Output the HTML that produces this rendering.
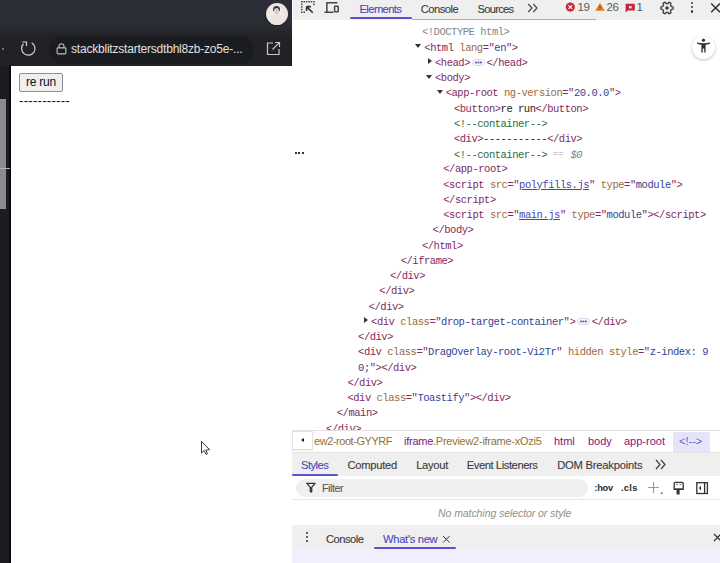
<!DOCTYPE html>
<html><head><meta charset="utf-8">
<style>
*{margin:0;padding:0;box-sizing:border-box}
html,body{width:720px;height:563px;overflow:hidden;background:#fff;font-family:"Liberation Sans",sans-serif}
.a{position:absolute}
/* browser chrome */
#topbar{left:0;top:0;width:292px;height:36px;background:linear-gradient(#2b2e36 0,#2a2d34 26px,#222428 35px)}
#addr{left:0;top:35px;width:292px;height:30.5px;background:#212226}
#pill{left:49px;top:36px;width:205px;height:27.5px;border-radius:14px;background:#1b1c1f}
#url{left:71px;top:42px;font-size:12px;letter-spacing:-0.21px;color:#e0e0e0;white-space:nowrap}
#leftstrip{left:0;top:65.5px;width:11px;height:498px;background:#1c1d20}
#leftline{left:9px;top:65px;width:2px;height:498px;background:#0a0a0b}
#thumb{left:0;top:99px;width:6px;height:110px;background:#8a8b8f}
#page{left:11px;top:65.5px;width:281px;height:498px;background:#fff}
#btn{left:18.5px;top:73.3px;width:44.3px;height:18.3px;background:#efefef;border:1px solid #8f8f8f;border-radius:2px;font-size:12px;letter-spacing:-0.25px;color:#111;text-align:left;padding-left:6.6px;line-height:17.5px}
#dashes{left:19px;top:93.2px;font-size:13.3px;color:#111;letter-spacing:0.2px}
/* devtools */
#dt{left:292px;top:0;width:429px;height:563px;background:#fff}
#tb{left:293px;top:0;width:427px;height:19.5px;background:#efefef}
.tab{font-size:10.6px;color:#3a3a3a;white-space:nowrap;-webkit-text-stroke:0.1px currentColor}
.mono{font-family:"Liberation Mono",monospace;font-size:10.5px;letter-spacing:-0.47px;white-space:pre;line-height:15px;height:15px}
.t{color:#7f2a5e}
.n{color:#9b6a42}
.v{color:#34448f}
.c{color:#2a6b40}
.g{color:#80868b}
.tri{width:0;height:0;border-left:3.5px solid transparent;border-right:3.5px solid transparent;border-top:4.2px solid #333}
.bc{font-size:11px;white-space:nowrap}
.k{color:#222}
.lk{color:#4b45a8;text-decoration:underline}
.eq{display:inline-block;width:11.66px;color:#9a9a9a;font-size:8.5px;letter-spacing:0;vertical-align:1.5px}
.sel{color:#80868b;font-style:italic}
.ell{display:inline-block;width:13px;height:7px;vertical-align:middle;margin:0 1.5px 0 2px;position:relative;top:-0.5px}
.trr{width:0;height:0;border-top:3.1px solid transparent;border-bottom:3.1px solid transparent;border-left:4.4px solid #333}
</style></head><body>
<div class="a" id="topbar"></div>
<div class="a" id="addr"></div>
<div class="a" id="pill"></div>
<div class="a" id="url">stackblitzstartersdtbhl8zb-zo5e-...</div>
<div class="a" id="leftstrip"></div>
<div class="a" id="leftline"></div>
<div class="a" id="thumb"></div>
<div class="a" style="left:0;top:168px;width:10px;height:1px;background:#b5b5b8"></div>
<div class="a" id="page"></div>
<div class="a" id="btn">re run</div>
<div class="a" id="dashes">-----------</div>

<div class="a" id="dt"></div>
<div class="a" id="tb"></div>
<div class="a tab" style="left:359.50px;top:3px;font-size:11.2px;letter-spacing:-0.597px;color:#4b47b9">Elements</div>
<div class="a" style="left:350px;top:17px;width:62px;height:2px;background:#5a52d0;border-radius:1px"></div>
<div class="a" style="left:412px;top:19.3px;width:184px;height:1.2px;background:#a9a3e6"></div>
<div class="a tab" style="left:420.75px;top:3px;font-size:11.2px;letter-spacing:-0.515px">Console</div>
<div class="a tab" style="left:477.50px;top:3px;font-size:11.2px;letter-spacing:-0.722px">Sources</div>



<!-- chrome icons -->
<svg class="a" style="left:19px;top:39px" width="19" height="19" viewBox="0 0 19 19"><path d="M12.65 3.7 A6.7 6.7 0 1 1 4.56 4.76" fill="none" stroke="#d4d4d4" stroke-width="1.2"/><path d="M3.3 3 H7.5 V7" fill="none" stroke="#d4d4d4" stroke-width="1.2"/></svg>
<div class="a" style="left:1.5px;top:48px;width:2px;height:2px;background:#888;border-radius:1px"></div>
<svg class="a" style="left:56px;top:43px" width="11" height="12" viewBox="0 0 11 12"><rect x="1.1" y="4.9" width="8.8" height="6" rx="0.9" fill="none" stroke="#bdbdbd" stroke-width="1.1"/><path d="M3 4.9 V3.3 A2.5 2.5 0 0 1 8 3.3 V4.9" fill="none" stroke="#bdbdbd" stroke-width="1.1"/></svg>
<svg class="a" style="left:266px;top:41px" width="15" height="15" viewBox="0 0 15 15"><path d="M7 2 H1.5 V13.5 H13 V8" fill="none" stroke="#c8c8c8" stroke-width="1.2"/><path d="M6.5 8.5 L13.3 1.7 M9 1.5 H13.5 V6" fill="none" stroke="#c8c8c8" stroke-width="1.2"/></svg>
<div class="a" style="left:265.2px;top:2.6px;width:23px;height:23px;border-radius:12px;background:#1e2024"></div><div class="a" style="left:265.8px;top:3.2px;width:21.8px;height:21.8px;border-radius:11px;background:radial-gradient(circle at 45% 55%, #f1ebe8 0 40%, #e9e1de 60%, #f3f1f0 80%);overflow:hidden"><div class="a" style="left:7px;top:2.5px;width:7px;height:5px;border-radius:4px 4px 1px 1px;background:#3a3433"></div><div class="a" style="left:8px;top:5px;width:5px;height:6px;border-radius:3px;background:#ddc8bf"></div><div class="a" style="left:5px;top:11px;width:11px;height:11px;border-radius:5px 5px 0 0;background:#efe3dd"></div></div>

<svg class="a" style="left:200px;top:440px" width="12" height="16" viewBox="0 0 12 16"><path d="M1.5 1.4 V13 L4.2 10.6 L6 14.4 L7.5 13.7 L5.8 10 L9.6 9.7 Z" fill="#fff" stroke="#222" stroke-width="0.9" stroke-linejoin="round"/></svg>
<!-- devtools toolbar icons -->
<svg class="a" style="left:299px;top:0px" width="17" height="16" viewBox="0 0 17 16"><rect x="2" y="1.0" width="1.5" height="1.5" fill="#444"/><rect x="4.45" y="1.0" width="1.5" height="1.5" fill="#444"/><rect x="6.9" y="1.0" width="1.5" height="1.5" fill="#444"/><rect x="9.35" y="1.0" width="1.5" height="1.5" fill="#444"/><rect x="11.8" y="1.0" width="1.5" height="1.5" fill="#444"/><rect x="14.25" y="1.0" width="1.5" height="1.5" fill="#444"/><rect x="2" y="3.6" width="1.5" height="1.5" fill="#444"/><rect x="2" y="6.2" width="1.5" height="1.5" fill="#444"/><rect x="2" y="8.8" width="1.5" height="1.5" fill="#444"/><rect x="2" y="11.5" width="1.5" height="1.5" fill="#444"/><rect x="14.25" y="3.6" width="1.5" height="1.5" fill="#444"/><rect x="4.45" y="11.5" width="1.5" height="1.5" fill="#444"/><path d="M7.6 6.6 L13.8 12.8 M7.4 6.6 H12 M7.6 6.4 V11" fill="none" stroke="#333" stroke-width="1.6"/></svg>
<svg class="a" style="left:323px;top:0px" width="18" height="16" viewBox="0 0 18 16"><path d="M3.3 2.8 H14.4 M3.9 2.8 V12.3 M1.5 12.3 H10.5" fill="none" stroke="#444" stroke-width="1.5"/><rect x="11.6" y="6.2" width="3.6" height="5.6" rx="0.5" fill="none" stroke="#444" stroke-width="1.5"/></svg>
<svg class="a" style="left:527px;top:3px" width="12" height="10" viewBox="0 0 12 10"><path d="M1.3 1 L5 5 L1.3 9 M6.3 1 L10 5 L6.3 9" fill="none" stroke="#444" stroke-width="1.2"/></svg>
<svg class="a" style="left:565px;top:2px" width="11" height="11" viewBox="0 0 11 11"><circle cx="5.3" cy="5.1" r="4.6" fill="#c8283b"/><path d="M3.5 3.3 L7.1 6.9 M7.1 3.3 L3.5 6.9" stroke="#fff" stroke-width="1.2"/></svg>
<div class="a tab" style="left:577.5px;top:0.8px;color:#5a5a5a;font-size:11.5px;letter-spacing:-0.3px;-webkit-text-stroke:0">19</div>
<svg class="a" style="left:594px;top:2px" width="12" height="10" viewBox="0 0 12 10"><path d="M6 0.8 L10.8 8.8 H1.2 Z" fill="#e0801c"/><path d="M6 3.8 V6.3" stroke="#7a3a00" stroke-width="1"/><circle cx="6" cy="7.6" r="0.5" fill="#7a3a00"/></svg>
<div class="a tab" style="left:606.5px;top:0.8px;color:#5a5a5a;font-size:11.5px;letter-spacing:-0.3px;-webkit-text-stroke:0">26</div>
<svg class="a" style="left:625px;top:3px" width="11" height="10" viewBox="0 0 11 10"><path d="M0.6 0.8 H9.8 V7.6 H3 L0.6 9.6 Z" fill="#c8283b"/><rect x="4" y="3" width="2.6" height="2.4" fill="#fff" opacity="0.85"/></svg>
<div class="a tab" style="left:636.5px;top:0.8px;color:#5a5a5a;font-size:11.5px;-webkit-text-stroke:0">1</div>
<svg class="a" style="left:659px;top:-0.5px" width="16" height="16" viewBox="0 0 16 16"><path d="M14.10 6.90 L14.10 9.10 L12.37 9.42 L11.42 11.08 L12.00 12.74 L10.10 13.83 L8.96 12.50 L7.04 12.50 L5.90 13.83 L4.00 12.74 L4.58 11.08 L3.63 9.42 L1.90 9.10 L1.90 6.90 L3.63 6.58 L4.58 4.92 L4.00 3.26 L5.90 2.17 L7.04 3.50 L8.96 3.50 L10.10 2.17 L12.00 3.26 L11.42 4.92 L12.37 6.58Z" fill="none" stroke="#3c3c3c" stroke-width="1.3" stroke-linejoin="round"/><circle cx="8" cy="8" r="1.8" fill="#3c3c3c"/></svg>
<div class="a" style="left:690.8px;top:2.1px;width:2.4px;height:2.4px;border-radius:1.2px;background:#3a3a3a"></div>
<div class="a" style="left:690.8px;top:6px;width:2.4px;height:2.4px;border-radius:1.2px;background:#3a3a3a"></div>
<div class="a" style="left:690.8px;top:10.2px;width:2.4px;height:2.4px;border-radius:1.2px;background:#3a3a3a"></div>
<svg class="a" style="left:710px;top:3px" width="12" height="10" viewBox="0 0 12 10"><path d="M1.2 0.6 L10 9.2 M10 0.6 L1.2 9.2" stroke="#2a2a2a" stroke-width="1.4"/></svg>

<!-- accessibility floating button -->
<div class="a" style="left:692px;top:36px;width:23px;height:23px;border-radius:12px;background:#fff;box-shadow:0 1px 3px rgba(0,0,0,0.25)"></div>
<svg class="a" style="left:696px;top:38px" width="15" height="16" viewBox="0 0 15 16"><circle cx="7.5" cy="2.2" r="1.6" fill="#333"/><path d="M1 4.5 Q7.5 6 14 4.5 L14 5.8 Q11 6.6 9.6 6.8 V14.5 H8.2 V10.5 H6.8 V14.5 H5.4 V6.8 Q4 6.6 1 5.8 Z" fill="#333"/></svg>
<!-- ... dots -->
<div class="a" style="left:294.5px;top:152px;width:2px;height:2px;background:#333"></div>
<div class="a" style="left:298px;top:152px;width:2px;height:2px;background:#333"></div>
<div class="a" style="left:301.5px;top:152px;width:2px;height:2px;background:#333"></div>

<!-- breadcrumb bar -->
<div class="a" style="left:292px;top:430px;width:428px;height:1px;background:#e2e2e2"></div>
<div class="a" style="left:292px;top:431px;width:428px;height:22px;background:#fff"></div>
<div class="a" style="left:292.4px;top:431.3px;width:21px;height:18.8px;background:#fff;border:1px solid #e2e2e2;box-shadow:0 1px 1px rgba(0,0,0,0.06)"></div>
<div class="a" style="left:301.2px;top:438.1px;width:0;height:0;border-top:2.3px solid transparent;border-bottom:2.3px solid transparent;border-right:3.8px solid #111"></div>
<div class="a bc" style="left:314px;top:435px;color:#94703a;letter-spacing:-0.45px">ew2-root-GYYRF</div>
<div class="a bc" style="left:404px;top:435px;letter-spacing:-0.26px"><span style="color:#881280">iframe</span><span style="color:#94703a">.Preview2-iframe-xOzi5</span></div>
<div class="a bc" style="left:554px;top:435px;color:#881280">html</div>
<div class="a bc" style="left:588px;top:435px;color:#881280">body</div>
<div class="a bc" style="left:624px;top:435px;color:#881280">app-root</div>
<div class="a" style="left:673px;top:432px;width:37px;height:20px;background:#e6e4fb"></div>
<div class="a bc" style="left:679px;top:435px;color:#5f5cc5">&lt;!--&gt;</div>
<div class="a" style="left:292px;top:452px;width:428px;height:1px;background:#e4e4e4"></div>

<!-- styles tabs -->
<div class="a" style="left:292px;top:453px;width:428px;height:23px;background:#efefef"></div>
<div class="a tab" style="left:301.00px;top:459px;font-size:11.2px;letter-spacing:-0.540px;color:#4b47b9">Styles</div>
<div class="a" style="left:292px;top:474px;width:46px;height:2px;background:#5a52d0;border-radius:1px"></div>
<div class="a tab" style="left:347.40px;top:459px;font-size:11.2px;letter-spacing:-0.254px">Computed</div>
<div class="a tab" style="left:416.20px;top:459px;font-size:11.2px;letter-spacing:-0.304px">Layout</div>
<div class="a tab" style="left:466.70px;top:459px;font-size:11.2px;letter-spacing:-0.422px">Event Listeners</div>
<div class="a tab" style="left:557.20px;top:459px;font-size:11.2px;letter-spacing:-0.214px">DOM Breakpoints</div>
<svg class="a" style="left:655px;top:459px" width="12" height="11" viewBox="0 0 12 11"><path d="M1 1 L5 5.5 L1 10 M6 1 L10 5.5 L6 10" fill="none" stroke="#444" stroke-width="1.3"/></svg>
<!-- filter row -->
<div class="a" style="left:292px;top:476px;width:428px;height:23px;background:#fff"></div>
<div class="a" style="left:296px;top:479px;width:292px;height:18px;border-radius:9px;background:#eef0f2"></div>
<svg class="a" style="left:306px;top:482px" width="10" height="11" viewBox="0 0 10 11"><path d="M0.9 1.3 H9.1 L5.7 5.4 V9.8 H4.3 V5.4 Z" fill="none" stroke="#333" stroke-width="1.3" stroke-linejoin="round"/></svg>
<div class="a tab" style="left:322px;top:482px;color:#555;letter-spacing:-0.4px">Filter</div>
<div class="a tab" style="left:594.3px;top:482.6px;color:#2a2a2a;font-size:9.3px;font-weight:bold;letter-spacing:-0.25px;-webkit-text-stroke:0">:hov</div>
<div class="a tab" style="left:620.9px;top:482.6px;color:#2a2a2a;font-size:9.3px;font-weight:bold;letter-spacing:0.3px;-webkit-text-stroke:0">.cls</div>
<svg class="a" style="left:647px;top:481px" width="17" height="14" viewBox="0 0 17 14"><path d="M6.5 1 V12 M1 6.5 H12" stroke="#9a9a9a" stroke-width="1.1"/><path d="M13 13 L15.5 10.5 V13 Z" fill="#777"/></svg>
<svg class="a" style="left:672px;top:481px" width="13" height="14" viewBox="0 0 13 14"><rect x="2.2" y="1.4" width="9" height="6.8" rx="1" fill="none" stroke="#333" stroke-width="1.3"/><path d="M1.6 7.6 H11.8 V8.9 H1.6 Z" fill="#333"/><path d="M4 3.4 H6 M7.5 3.4 H9.5" stroke="#777" stroke-width="1"/><path d="M4.6 8.5 H7.6 V13.5 H4.6 Z" fill="#333"/></svg>
<svg class="a" style="left:695px;top:481px" width="14" height="14" viewBox="0 0 14 14"><rect x="1.8" y="1.7" width="10.6" height="10.8" fill="none" stroke="#333" stroke-width="1.3"/><path d="M9.6 1.7 V12.5" stroke="#333" stroke-width="1.3"/><path d="M6 4.8 L3.9 7.1 L6 9.4 Z" fill="#333"/></svg>
<div class="a" style="left:292px;top:499px;width:428px;height:1px;background:#e6e6e6"></div>
<div class="a" style="left:438px;top:506.5px;white-space:nowrap;font-size:10.5px;letter-spacing:-0.07px;color:#909090;font-style:italic">No matching selector or style</div>

<!-- drawer -->
<div class="a" style="left:292px;top:525px;width:428px;height:24px;background:#efefef"></div>
<div class="a" style="left:305.9px;top:532.1px;width:2.2px;height:2.2px;border-radius:1px;background:#333"></div>
<div class="a" style="left:305.9px;top:536px;width:2.2px;height:2.2px;border-radius:1px;background:#333"></div>
<div class="a" style="left:305.9px;top:540.3px;width:2.2px;height:2.2px;border-radius:1px;background:#333"></div>
<div class="a tab" style="left:326.00px;top:533px;font-size:11.2px;letter-spacing:-0.515px">Console</div>
<div class="a tab" style="left:383.00px;top:533px;font-size:11.2px;letter-spacing:-0.308px;color:#4b47b9">What's new</div>
<svg class="a" style="left:441.5px;top:534.5px" width="9" height="9" viewBox="0 0 9 9"><path d="M1 1 L7.6 7.6 M7.6 1 L1 7.6" stroke="#3a3a3a" stroke-width="1"/></svg>
<div class="a" style="left:374px;top:547px;width:82px;height:2px;background:#5a52d0;border-radius:1px"></div>
<svg class="a" style="left:713px;top:533px" width="9" height="9" viewBox="0 0 9 9"><path d="M1 1 L8 8 M8 1 L1 8" stroke="#333" stroke-width="1.2"/></svg>
<div class="a" style="left:292px;top:549px;width:428px;height:14px;background:#f1effd"></div>

<div class="a" style="left:0;top:0;width:720px;height:430px;overflow:hidden"><div class="a mono" style="left:421.95px;top:25.30px"><span class="g">&lt;!DOCTYPE html&gt;</span></div>
<div class="a mono" style="left:424.35px;top:40.54px"><span class="t">&lt;html</span> <span class="n">lang</span><span class="t">="</span><span class="v">en</span><span class="t">"&gt;</span></div>
<div class="a tri" style="left:415.35px;top:44.24px"></div>
<div class="a mono" style="left:435.00px;top:55.78px"><span class="t">&lt;head&gt;</span><span class="ell"><svg width="13" height="7" viewBox="0 0 13 7" style="display:block"><rect x="0.5" y="0.5" width="12" height="6" rx="3" fill="#f7f6fd" stroke="#d9d6f3" stroke-width="1"/><rect x="3.2" y="2.6" width="1.8" height="1.8" fill="#5e5a9c"/><rect x="5.6" y="2.6" width="1.8" height="1.8" fill="#5e5a9c"/><rect x="8" y="2.6" width="1.8" height="1.8" fill="#5e5a9c"/></svg></span><span class="t">&lt;/head&gt;</span></div>
<div class="a trr" style="left:427.60px;top:58.08px"></div>
<div class="a mono" style="left:435.00px;top:71.02px"><span class="t">&lt;body&gt;</span></div>
<div class="a tri" style="left:426.00px;top:74.72px"></div>
<div class="a mono" style="left:445.65px;top:86.26px"><span class="t">&lt;app-root</span> <span class="n">ng-version</span><span class="t">="</span><span class="v">20.0.0</span><span class="t">"&gt;</span></div>
<div class="a tri" style="left:436.65px;top:89.96px"></div>
<div class="a mono" style="left:453.90px;top:101.50px"><span class="t">&lt;button&gt;</span><span class="k">re run</span><span class="t">&lt;/button&gt;</span></div>
<div class="a mono" style="left:453.90px;top:116.74px"><span class="c">&lt;!--container--&gt;</span></div>
<div class="a mono" style="left:453.90px;top:131.98px"><span class="t">&lt;div&gt;</span><span class="k">-----------</span><span class="t">&lt;/div&gt;</span></div>
<div class="a mono" style="left:453.90px;top:147.22px"><span class="c">&lt;!--container--&gt;</span> <span class="eq">==</span> <span class="sel">$0</span></div>
<div class="a mono" style="left:443.25px;top:162.46px"><span class="t">&lt;/app-root&gt;</span></div>
<div class="a mono" style="left:443.25px;top:177.70px"><span class="t">&lt;script</span> <span class="n">src</span><span class="t">="</span><span class="lk">polyfills.js</span><span class="t">"</span> <span class="n">type</span><span class="t">="</span><span class="v">module</span><span class="t">"&gt;</span></div>
<div class="a mono" style="left:443.25px;top:192.94px"><span class="t">&lt;/script&gt;</span></div>
<div class="a mono" style="left:443.25px;top:208.18px"><span class="t">&lt;script</span> <span class="n">src</span><span class="t">="</span><span class="lk">main.js</span><span class="t">"</span> <span class="n">type</span><span class="t">="</span><span class="v">module</span><span class="t">"&gt;&lt;/script&gt;</span></div>
<div class="a mono" style="left:432.60px;top:223.42px"><span class="t">&lt;/body&gt;</span></div>
<div class="a mono" style="left:421.95px;top:238.66px"><span class="t">&lt;/html&gt;</span></div>
<div class="a mono" style="left:400.65px;top:253.90px"><span class="t">&lt;/iframe&gt;</span></div>
<div class="a mono" style="left:390.00px;top:269.14px"><span class="t">&lt;/div&gt;</span></div>
<div class="a mono" style="left:379.35px;top:284.38px"><span class="t">&lt;/div&gt;</span></div>
<div class="a mono" style="left:368.70px;top:299.62px"><span class="t">&lt;/div&gt;</span></div>
<div class="a mono" style="left:371.10px;top:314.86px"><span class="t">&lt;div</span> <span class="n">class</span><span class="t">="</span><span class="v">drop-target-container</span><span class="t">"&gt;</span><span class="ell"><svg width="13" height="7" viewBox="0 0 13 7" style="display:block"><rect x="0.5" y="0.5" width="12" height="6" rx="3" fill="#f7f6fd" stroke="#d9d6f3" stroke-width="1"/><rect x="3.2" y="2.6" width="1.8" height="1.8" fill="#5e5a9c"/><rect x="5.6" y="2.6" width="1.8" height="1.8" fill="#5e5a9c"/><rect x="8" y="2.6" width="1.8" height="1.8" fill="#5e5a9c"/></svg></span><span class="t">&lt;/div&gt;</span></div>
<div class="a trr" style="left:363.70px;top:317.16px"></div>
<div class="a mono" style="left:358.05px;top:330.10px"><span class="t">&lt;/div&gt;</span></div>
<div class="a mono" style="left:358.05px;top:345.34px"><span class="t">&lt;div</span> <span class="n">class</span><span class="t">="</span><span class="v">DragOverlay-root-Vi2Tr</span><span class="t">"</span> <span class="n">hidden</span> <span class="n">style</span><span class="t">="</span><span class="v">z-index: 9</span></div>
<div class="a mono" style="left:358.05px;top:360.58px"><span class="v">0;</span><span class="t">"&gt;&lt;/div&gt;</span></div>
<div class="a mono" style="left:347.40px;top:375.82px"><span class="t">&lt;/div&gt;</span></div>
<div class="a mono" style="left:347.40px;top:391.06px"><span class="t">&lt;div</span> <span class="n">class</span><span class="t">="</span><span class="v">Toastify</span><span class="t">"&gt;&lt;/div&gt;</span></div>
<div class="a mono" style="left:336.75px;top:406.30px"><span class="t">&lt;/main&gt;</span></div>
<div class="a mono" style="left:326.10px;top:421.54px"><span class="t">&lt;/div&gt;</span></div></div>
</body></html>
